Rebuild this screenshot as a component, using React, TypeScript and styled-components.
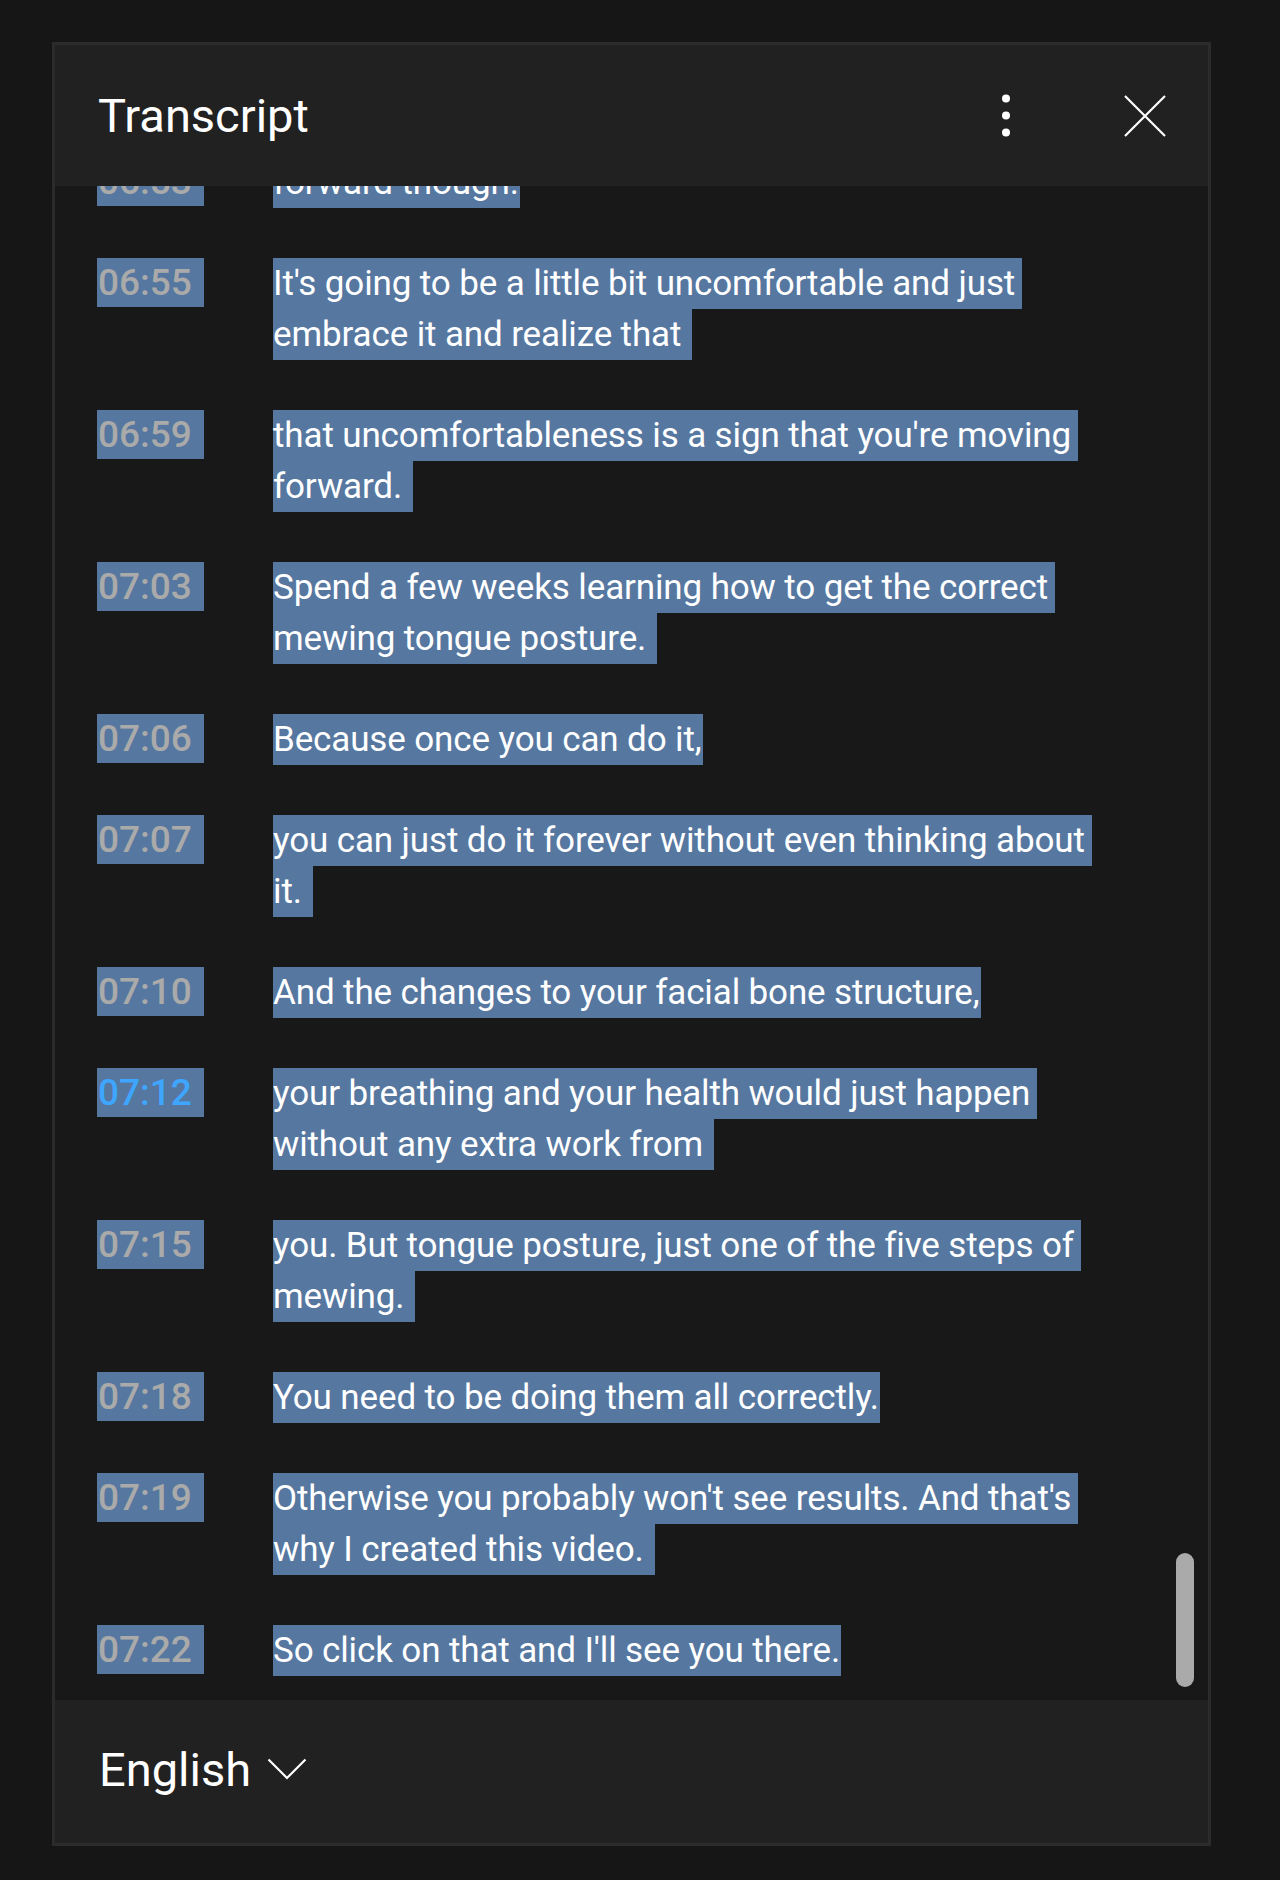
import React from "react";
import styled, { createGlobalStyle } from "styled-components";

const GlobalStyle = createGlobalStyle`
  html, body {
    margin: 0;
    padding: 0;
    background: #161616;
  }
  body {
    font-family: Roboto, "Noto Sans", "Liberation Sans", sans-serif;
    color: #f1f1f1;
  }
`;

const Page = styled.div`
  padding: 42px 0 0 52px;
  height: 1880px;
  box-sizing: border-box;
`;

const Panel = styled.section`
  width: 1159px;
  height: 1804px;
  box-sizing: border-box;
  border: 3px solid #2b2b2b;
  background: #181818;
  display: flex;
  flex-direction: column;
`;

const Header = styled.header`
  height: 141px;
  flex: none;
  background: #212121;
  display: flex;
  align-items: center;
  padding: 0 42px 0 43px;
`;

const Title = styled.h2`
  margin: 0;
  flex: 1;
  font-size: 47px;
  font-weight: 400;
  color: #ffffff;
`;

const IconButton = styled.button<{ $gap?: number }>`
  border: 0;
  background: transparent;
  padding: 0;
  margin-left: ${(p) => p.$gap ?? 0}px;
  display: flex;
  align-items: center;
  justify-content: center;
  color: #ffffff;
  cursor: pointer;
`;

const Body = styled.div`
  position: relative;
  flex: 1;
  min-height: 0;
  overflow: hidden;
  display: flex;
  flex-direction: column;
  justify-content: flex-end;
  padding-left: 42px;
`;

const Row = styled.div`
  display: flex;
  align-items: flex-start;
  padding: 26px 0 24px;
  flex: none;
`;

const TimeCol = styled.div`
  width: 176px;
  flex: none;
`;

const Stamp = styled.div<{ $active?: boolean }>`
  width: fit-content;
  height: 49px;
  line-height: 49px;
  font-size: 37px;
  padding: 0 12px 0 1px;
  background: #56779f;
  color: ${(p) => (p.$active ? "#3ea6ff" : "#aaaaaa")};
  font-weight: 500;
`;

const TextCol = styled.div`
  flex: 1;
  min-width: 0;
`;

const Line = styled.div<{ $tail: number }>`
  width: fit-content;
  height: 51px;
  line-height: 51px;
  font-size: 35px;
  padding-right: ${(p) => p.$tail}px;
  background: #56779f;
  color: #ffffff;
  white-space: nowrap;
  letter-spacing: -0.13px;
`;

const Thumb = styled.div`
  position: absolute;
  right: 14px;
  bottom: 13px;
  width: 18px;
  height: 134px;
  border-radius: 9px;
  background: #aaaaaa;
`;

const Footer = styled.footer`
  height: 143px;
  flex: none;
  box-sizing: border-box;
  background: #212121;
  display: flex;
  align-items: center;
  padding: 0 0 5px 44px;
`;

const LangButton = styled.button`
  border: 0;
  background: transparent;
  padding: 0;
  display: flex;
  align-items: center;
  gap: 16px;
  font-family: inherit;
  font-size: 47px;
  color: #ffffff;
  cursor: pointer;
`;

type Segment = { time: string; lines: string[]; active?: boolean };

const segments: Segment[] = [
  { time: "06:53", lines: ["forward though."] },
  {
    time: "06:55",
    lines: ["It's going to be a little bit uncomfortable and just", "embrace it and realize that"],
  },
  {
    time: "06:59",
    lines: ["that uncomfortableness is a sign that you're moving", "forward."],
  },
  {
    time: "07:03",
    lines: ["Spend a few weeks learning how to get the correct", "mewing tongue posture."],
  },
  { time: "07:06", lines: ["Because once you can do it,"] },
  {
    time: "07:07",
    lines: ["you can just do it forever without even thinking about", "it."],
  },
  { time: "07:10", lines: ["And the changes to your facial bone structure,"] },
  {
    time: "07:12",
    active: true,
    lines: ["your breathing and your health would just happen", "without any extra work from"],
  },
  {
    time: "07:15",
    lines: ["you. But tongue posture, just one of the five steps of", "mewing."],
  },
  { time: "07:18", lines: ["You need to be doing them all correctly."] },
  {
    time: "07:19",
    lines: ["Otherwise you probably won't see results. And that's", "why I created this video."],
  },
  { time: "07:22", lines: ["So click on that and I'll see you there."] },
];

function tailFor(count: number, index: number) {
  if (count === 1) return 1;
  return index === count - 1 ? 11 : 7;
}

export default function App() {
  return (
    <>
      <GlobalStyle />
      <Page>
        <Panel>
          <Header>
            <Title>Transcript</Title>
            <IconButton aria-label="More actions">
              <svg width="10" height="44" viewBox="0 0 10 44">
                <circle cx="5" cy="4.5" r="4" fill="#fff" />
                <circle cx="5" cy="21.5" r="4" fill="#fff" />
                <circle cx="5" cy="38.5" r="4" fill="#fff" />
              </svg>
            </IconButton>
            <IconButton aria-label="Close" $gap={113}>
              <svg width="42" height="42" viewBox="0 0 42 42">
                <path d="M1 1 L41 41 M41 1 L1 41" stroke="#fff" strokeWidth="2.2" fill="none" />
              </svg>
            </IconButton>
          </Header>
          <Body>
            {segments.map((s) => (
              <Row key={s.time}>
                <TimeCol>
                  <Stamp $active={s.active}>{s.time}</Stamp>
                </TimeCol>
                <TextCol>
                  {s.lines.map((l, i) => (
                    <Line key={i} $tail={tailFor(s.lines.length, i)}>
                      {l}
                    </Line>
                  ))}
                </TextCol>
              </Row>
            ))}
            <Thumb />
          </Body>
          <Footer>
            <LangButton>
              English
              <svg width="40" height="22" viewBox="0 0 40 22">
                <path d="M1.5 1.5 L20 20 L38.5 1.5" stroke="#fff" strokeWidth="2.2" fill="none" />
              </svg>
            </LangButton>
          </Footer>
        </Panel>
      </Page>
    </>
  );
}
